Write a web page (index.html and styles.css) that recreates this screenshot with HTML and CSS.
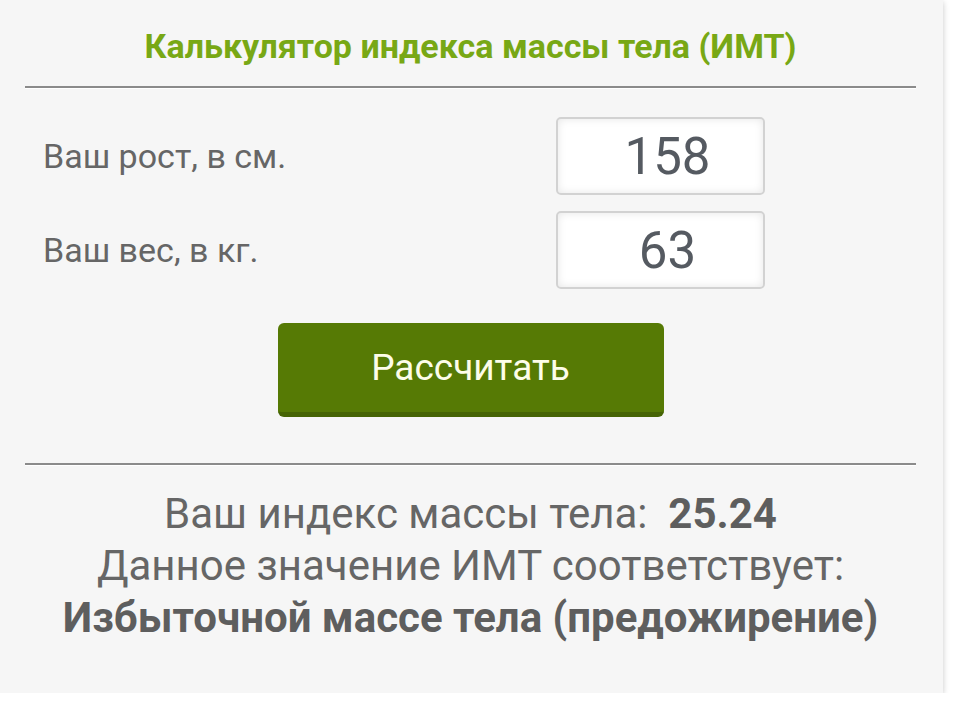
FILE: index.html
```html
<!DOCTYPE html>
<html lang="ru">
<head>
    <meta charset="UTF-8">
    <meta name="viewport" content="width=device-width, initial-scale=1.0">
    <title>Калькулятор ИМТ</title>
    <link rel="stylesheet" href="styles.css">
</head>
<body>
    <div class="card">
        <h1 class="title">Калькулятор индекса массы тела (ИМТ)</h1>
        <hr class="line">
        <div class="row row-first">
            <label class="label" for="height">Ваш рост, в см.</label>
            <input class="field" id="height" type="text" value="158">
        </div>
        <div class="row">
            <label class="label" for="weight">Ваш вес, в кг.</label>
            <input class="field" id="weight" type="text" value="63">
        </div>
        <div class="actions">
            <button class="calc-button">Рассчитать</button>
        </div>
        <hr class="line">
        <div class="result">
            <p class="result-line">Ваш индекс массы тела:&nbsp; <b>25.24</b></p>
            <p class="result-line">Данное значение ИМТ соответствует:</p>
            <p class="result-line"><b>Избыточной массе тела (предожирение)</b></p>
        </div>
    </div>
</body>
</html>
```

FILE: styles.css
```css
body {
    margin: 0;
    padding: 0;
    background-color: #fff;
    font-family: Roboto, "Liberation Sans", sans-serif;
}
.card {
    width: 943px;
    height: 693px;
    box-sizing: border-box;
    padding: 0 27px 0 25px;
    background-color: #f6f6f6;
    box-shadow: 0 2px 6px rgba(0, 0, 0, 0.22);
}
.title {
    margin: 0;
    padding-top: 26px;
    height: 86px;
    box-sizing: border-box;
    text-align: center;
    font-size: 34px;
    font-weight: bold;
    line-height: 40px;
    color: #78a815;
}
.line {
    margin: 0;
    height: 0;
    border: none;
    border-top: 2px solid #8b8b8b;
    border-bottom: 1px solid #fff;
}
.row {
    display: flex;
    align-items: center;
    padding-left: 18px;
    margin-top: 16px;
}
.row-first {
    margin-top: 28px;
}
.label {
    flex: 1;
    font-size: 34px;
    color: #666;
}
.field {
    width: 209px;
    height: 78px;
    box-sizing: border-box;
    margin-right: 151px;
    padding: 0 0 0 14px;
    border: 2px solid #d2d2d2;
    border-radius: 5px;
    background-color: #fff;
    box-shadow: inset 0 0 8px rgba(0, 0, 0, 0.1);
    text-align: center;
    font-family: Roboto, "Liberation Sans", sans-serif;
    font-size: 51px;
    color: #555a61;
}
.actions {
    display: flex;
    justify-content: center;
    padding: 34px 0 46px;
}
.calc-button {
    width: 386px;
    height: 94px;
    border: none;
    border-bottom: 5px solid #466405;
    border-radius: 6px;
    background-color: #567a05;
    color: #fdfde9;
    font-family: Roboto, "Liberation Sans", sans-serif;
    font-size: 37px;
    cursor: pointer;
}
.result {
    text-align: center;
    color: #666;
    font-size: 42px;
    padding-top: 22px;
}
.result-line {
    margin: 0;
    line-height: 52px;
}
.result-line b {
    color: #5e5e5e;
}
```
